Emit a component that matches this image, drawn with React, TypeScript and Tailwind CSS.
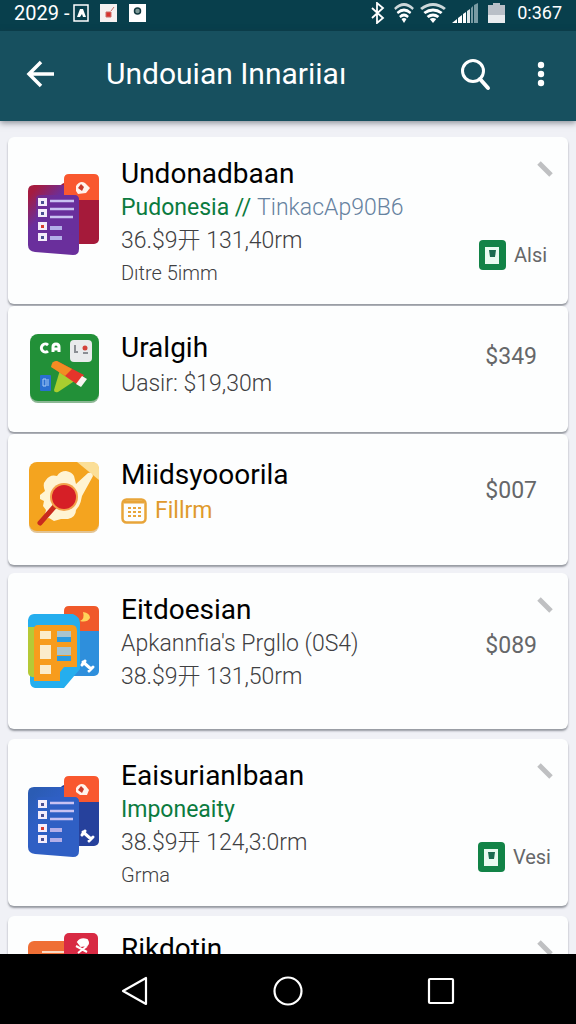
import { ReactNode } from "react";
import clsx from "clsx";

type Item = {
  title: string;
  icon: ReactNode;
  iconClass: string;
  cardClass: string;
  lines: ReactNode;
  editable?: boolean;
  price?: string;
  priceClass?: string;
  badge?: string;
};

type DocStackProps = { id: string; back: string; edge: string; front: string; glyph: string; tail?: boolean };

function DocStackIcon({ id, back, edge, front, glyph, tail }: DocStackProps) {
  return (
    <svg viewBox="0 0 72 84" className="w-[72px] h-[84px]" aria-hidden="true">
      <defs>
        <linearGradient id={id} x1="0" y1="0" x2="0.4" y2="0.5">
          <stop offset="0.2" stopColor={edge} />
          <stop offset="0.8" stopColor={front} />
        </linearGradient>
      </defs>
      <rect x="32" y="10" width="39" height="61" rx="5" fill={back} />
      <path d="M36 6q0-5 5-5h25q5 0 5 5v21H36z" fill="#f9582f" />
      <path d="M6 12h30v10h10q5 0 5 5v49q0 6-6 6L7 79q-7-1-7-7V18q0-6 6-6z" fill={`url(#${id})`} />
      <path d="M12 22h34q5 0 5 5v40q-20-20-43-10V26q0-4 4-4z" fill={front} opacity="0.7" />
      <path d={glyph} fill="#fff3ec" />
      <path d="m53 11 3 3-2 4-4-3z" fill="#c93a2a" />
      {tail && (
        <path d="M55 57l8 7M54 60l3-4M61 66l4-4" stroke="#fff" strokeWidth="3" strokeLinecap="round" />
      )}
      {[25, 36, 49, 60].map((y, i) => (
        <g key={y}>
          <rect x="10" y={y} width="9" height="8" fill="#f4ecfb" />
          <rect x="13" y={y + 3} width="3" height="3" fill={i === 2 ? "#d93a2e" : "#4a4f93"} />
        </g>
      ))}
      <path d="M22 28h24M22 36h24M22 44h23" stroke="#c9c2f2" strokeWidth="2.5" />
      <path d="M22 55h12M22 65h12" stroke="#b3aee8" strokeWidth="4" />
    </svg>
  );
}

function GreenAppIcon() {
  return (
    <svg viewBox="0 0 72 72" className="w-[72px] h-[72px]" aria-hidden="true">
      <rect x="2" y="3" width="69" height="66" rx="8" fill="#1c6f2a" opacity="0.5" />
      <rect x="2" y="0" width="69" height="67" rx="8" fill="#229038" />
      <path d="M20 11a4 4 0 1 0 0 6M25 18v-5q0-3 3-3t3 3v5M25 15h6" fill="none" stroke="#fff" strokeWidth="3" />
      <rect x="42" y="6" width="22" height="22" rx="4" fill="#e9ebec" />
      <path d="M47 11v7h3M55 19h5" stroke="#8b8f94" strokeWidth="2" fill="none" />
      <circle cx="57" cy="14" r="2.5" fill="#d3423a" />
      <path d="M32 36 26 56q0 3 4 2l18-12z" fill="#a9cd2f" />
      <path d="M29 27 24 33l26 18 6-10z" fill="#e5352b" />
      <path d="M29 27q-5-1-6 6l14 9 7-7z" fill="#f38b23" />
      <path d="m54 42 5 3-6 8-5-3z" fill="#f8f4f0" />
      <rect x="12" y="41" width="11" height="16" rx="1" fill="#2a6fd0" />
      <path d="M15 45h3v7h-3zM20 45v7" stroke="#a8ccf6" fill="none" />
    </svg>
  );
}

function OrangeAppIcon() {
  return (
    <svg viewBox="0 0 72 72" className="w-[72px] h-[72px]" aria-hidden="true">
      <rect x="1" y="3" width="70" height="68" rx="8" fill="#c98a2a" opacity="0.5" />
      <rect x="1" y="0" width="70" height="69" rx="8" fill="#f4a41f" />
      <path d="M49 0h15q7 0 7 7v11z" fill="#fbdf98" />
      <path d="M18 18q4-6 11-4 3-5 9-5 6 1 8 5l2 8 12-11q4-1 5 3L54 34q-1 6-3 10l-3 4q0 7-8 9l-7 0-7 2-5-3-5 1 2-9-3-4 1-5-4-2 0-4 5-4q-3-7 1-11z" fill="#fff4d3" />
      <path d="M27 44 12 61" stroke="#c92a1d" strokeWidth="5" strokeLinecap="round" />
      <circle cx="36" cy="35" r="14" fill="#f3a14b" />
      <circle cx="36" cy="35" r="12" fill="#d61f26" />
    </svg>
  );
}

function BlueCardIcon() {
  return (
    <svg viewBox="0 0 72 84" className="w-[72px] h-[84px]" aria-hidden="true">
      <rect x="36" y="10" width="35" height="61" rx="5" fill="#2e8fdc" />
      <path d="M36 6q0-5 5-5h25q5 0 5 5v20H36z" fill="#f0592a" />
      <path d="M55 7q7 1 7 6-3 5-10 3 5-2 3-9z" fill="#ffd35a" />
      <path d="M6 9h39q7 3 7 9v46L36 83H7q-5-1-5-7V22H0v-7q1-6 6-6z" fill="#25aeee" />
      <path d="M0 22h8v50H4q-4-1-4-5z" fill="#b5c936" />
      <path d="M10 20h34q5 0 5 6v36H36l-4 5v9H6V24q0-4 4-4z" fill="#f79c1d" />
      <path d="M12 26h11v8H12zM12 40h11v14H12zM12 60h11v9H12z" fill="#fbeccb" />
      <path d="M29 26h14v10H29zM29 42h14v8H29z" fill="#a9c5cf" />
      <path d="M29 32h14v5H29zM29 51h14v5H29z" fill="#2a9be0" />
      <path d="M55 57l8 7M54 60l3-4M61 66l4-4" stroke="#fff" strokeWidth="3" strokeLinecap="round" />
    </svg>
  );
}

function RedCardIcon() {
  return (
    <svg viewBox="0 0 72 84" className="w-[72px] h-[84px]" aria-hidden="true">
      <rect x="0" y="9" width="52" height="70" rx="6" fill="#ef6f35" />
      <path d="M14 20h22" stroke="#fbd9c2" strokeWidth="2" />
      <rect x="36" y="1" width="34" height="50" rx="5" fill="#d82a43" />
      <path d="M50 10q3-4 9-2 2 3 0 5l-6 1zM48 14l11 6M59 14l-9 7" stroke="#fff" strokeWidth="2" fill="#fff" />
    </svg>
  );
}

function CalendarIcon() {
  return (
    <svg viewBox="0 0 26 26" className="w-[26px] h-[26px]" fill="none" stroke="#e8a53a" aria-hidden="true">
      <rect x="1.5" y="1.5" width="23" height="23" rx="4" strokeWidth="2.5" />
      <path d="M3 4h20" strokeWidth="3" />
      <path d="M7 10h13M7 14h13M7 18h13" strokeWidth="2" strokeDasharray="3 2" />
    </svg>
  );
}

function WifiIcon({ className }: { className: string }) {
  return (
    <svg viewBox="0 0 24 20" preserveAspectRatio="none" className={className} fill="none" stroke="#fff" strokeWidth="2.8" aria-hidden="true">
      <path d="M1 6q11-9 22 0" opacity="0.8" />
      <path d="M4 10q8-6 16 0M7 14q5-4 10 0" />
      <path d="m9 16 3 4 3-4q-3-2-6 0z" fill="#fff" stroke="none" />
    </svg>
  );
}

const items: Item[] = [
  {
    title: "Undonadbaan",
    icon: <DocStackIcon id="doc-purple" back="#a51a3a" edge="#a51c40" front="#6a2f9c" glyph="M48 13q4-6 9-3l5 5-4 5-8 1-2-3z" />,
    iconClass: "mt-9",
    cardClass: "pt-5 pb-3.5",
    lines: (
      <>
        <p className="text-[#0b7b3f] font-normal">
          Pudonesia // <span className="text-[#6682a0] font-light">TinkacAp90B6</span>
        </p>
        <p>36.$9开 131,40rm</p>
        <p className="text-[20px]">Dıtre 5imm</p>
      </>
    ),
    editable: true,
    badge: "Alsi",
  },
  {
    title: "Uralgih",
    icon: <GreenAppIcon />,
    iconClass: "mt-7",
    cardClass: "pt-[25px] pb-8",
    lines: <p className="pt-0.5">Uasir: $19,30m</p>,
    price: "$349",
    priceClass: "mt-[34px]",
  },
  {
    title: "Miidsyooorila",
    icon: <OrangeAppIcon />,
    iconClass: "mt-7",
    cardClass: "pt-6 pb-[38px]",
    lines: (
      <p className="flex items-center gap-2 pt-0.5 text-[#e09a2c] font-normal">
        <CalendarIcon />
        Fillrm
      </p>
    ),
    price: "$007",
    priceClass: "mt-10",
  },
  {
    title: "Eitdoesian",
    icon: <BlueCardIcon />,
    iconClass: "mt-8",
    cardClass: "pt-5 pb-9",
    lines: (
      <>
        <p>Apkannfia's Prgllo (0S4)</p>
        <p>38.$9开 131,50rm</p>
      </>
    ),
    editable: true,
    price: "$089",
    priceClass: "mt-3",
  },
  {
    title: "Eaisurianlbaan",
    icon: <DocStackIcon id="doc-blue" back="#26419c" edge="#2b5cb4" front="#2f5fc4" glyph="M48 13q4-6 9-3l4 5-2 5-7 0-4-3z" tail />,
    iconClass: "mt-9",
    cardClass: "pt-5 pb-3.5",
    lines: (
      <>
        <p className="text-[#0b7b3f] font-normal">Imponeaity</p>
        <p>38.$9开 124,3:0rm</p>
        <p className="text-[20px]">Grma</p>
      </>
    ),
    editable: true,
    badge: "Vesi",
  },
  {
    title: "Rikdotin",
    icon: <RedCardIcon />,
    iconClass: "mt-4",
    cardClass: "pt-4 pb-9",
    lines: null,
    editable: true,
  },
];

function Card({ item }: { item: Item }) {
  return (
    <li className="flex bg-[#fdfefe] rounded-md pl-5 pr-[11px] shadow-[0_2px_2px_rgba(60,65,75,0.5)]">
      <div className={clsx("shrink-0", item.iconClass)}>{item.icon}</div>
      <div className={clsx("flex-1 min-w-0 pl-[21px] text-[23px] leading-[33px] font-light text-[#3f4042] whitespace-nowrap", item.cardClass)}>
        <h2 className="text-[28px] leading-[34px] font-normal text-black">{item.title}</h2>
        {item.lines}
      </div>
      <div className={clsx("flex flex-col items-end shrink-0", item.editable && "pt-5")}>
        {item.editable && (
          <button aria-label={`Edit ${item.title}`} className="size-6">
            <svg viewBox="0 0 24 24" className="size-6" aria-hidden="true">
              <path d="M6 6 18 18" stroke="#bfc0c2" strokeWidth="5" />
            </svg>
          </button>
        )}
        {item.price && (
          <span className={clsx("pr-5 text-[23px] leading-[34px] text-[#666769]", item.priceClass)}>{item.price}</span>
        )}
        {item.badge && (
          <div className="mt-auto mb-8 pr-1.5 flex items-center gap-2 text-[20px] leading-[34px] text-[#666769]">
            <svg viewBox="0 0 27 30" className="w-[27px] h-[30px]" aria-hidden="true">
              <rect width="27" height="30" rx="4" fill="#128347" />
              <rect x="6" y="7" width="14" height="17" fill="#e9fbf1" />
              <path d="M10 10h7l-1 7h-5z" fill="#1b6b50" />
            </svg>
            <span className="min-w-[37px]">{item.badge}</span>
          </div>
        )}
      </div>
    </li>
  );
}

export default function App() {
  return (
    <div className="h-screen flex flex-col overflow-hidden bg-[#f0f1f6] font-['Roboto','Noto_Sans_CJK_SC',sans-serif]">
      {/* Status bar */}
      <div className="h-[31px] shrink-0 bg-[#083f4c] text-white flex items-start justify-between px-3.5 text-[20px] leading-[26px]">
        <div className="flex items-center h-[25px]">
          <span className="w-[59px] whitespace-nowrap">2029 -</span>
          <svg viewBox="0 0 74 18" className="w-[74px] h-[18px]" aria-hidden="true">
            <rect x="1" y="1" width="14" height="16" fill="none" stroke="#fff" strokeWidth="1.5" />
            <path d="M4 13 7 5h3l3 8h-3l-1-3-2 3z" fill="#fff" />
            <rect x="27" width="17" height="18" fill="#f6f1f1" />
            <path d="M33 8h5v5h-5zM38 7l3-4" fill="#d8322e" stroke="#c9706c" />
            <rect x="56" width="17" height="18" fill="#fff" />
            <circle cx="64.5" cy="7" r="3" fill="#7d9896" stroke="#12383f" strokeWidth="1.5" />
          </svg>
        </div>
        <div className="flex items-center h-[25px]">
          <svg viewBox="0 0 16 22" className="w-4 h-[22px] mr-2" fill="none" stroke="#fff" strokeWidth="1.8" aria-hidden="true">
            <path d="m2 6 11 10-6 5V1l6 5L2 16" />
          </svg>
          <WifiIcon className="w-5 h-5 mr-1.5" />
          <WifiIcon className="w-[26px] h-5 mr-1.5" />
          <svg viewBox="0 0 26 20" className="w-[26px] h-5 mr-2.5" aria-hidden="true">
            <path d="M0 20 5 16v4zM6 15l4-3v8H6zM11 11l3-2v11h-3z" fill="#fff" />
            <path d="M15 8l3-2v14h-3z" fill="#dfe8ea" />
            <path d="M19 5l2-2v17h-2zM22 2l4-2v20h-4z" fill="#7a9ba3" />
          </svg>
          <svg viewBox="0 0 17 20" className="w-[17px] h-5 mr-3" aria-hidden="true">
            <path d="M0 2h5V0h7v2h5v18H0z" fill="#b9bfc7" />
            <path d="M0 12h17v8H0z" fill="#e8ebee" />
          </svg>
          <span className="text-[18px]">0:367</span>
        </div>
      </div>

      {/* App bar */}
      <header className="h-[90px] shrink-0 bg-[#17505f] text-white flex items-center pl-6 pr-5 pb-1 shadow-[0_2px_6px_rgba(40,45,60,0.5)]">
        <button aria-label="Back" className="w-[82px]">
          <svg viewBox="0 0 34 34" className="size-[34px]" fill="none" stroke="#fff" strokeWidth="3.5" aria-hidden="true">
            <path d="M30 17H6M17 5 5 17l12 12" />
          </svg>
        </button>
        <h1 className="flex-1 text-[30px] leading-9 whitespace-nowrap">Undouian Innariiaı</h1>
        <button aria-label="Search" className="mr-[34px]">
          <svg viewBox="0 0 34 34" className="size-[34px]" fill="none" stroke="#fff" strokeWidth="3" aria-hidden="true">
            <circle cx="15" cy="14" r="10.5" />
            <path d="m22 22 8 9" strokeWidth="4" strokeLinecap="round" />
          </svg>
        </button>
        <button aria-label="More options">
          <svg viewBox="0 0 30 30" className="size-[30px]" fill="#fff" aria-hidden="true">
            <circle cx="15" cy="6" r="3.2" />
            <circle cx="15" cy="15" r="3.2" />
            <circle cx="15" cy="24" r="3.2" />
          </svg>
        </button>
      </header>

      {/* List */}
      <main className="flex-1 min-h-0 overflow-hidden px-2 pt-4 flex flex-col gap-2">
        <ul className="flex flex-col gap-0.5">
          {items.slice(0, 3).map((item) => (
            <Card key={item.title} item={item} />
          ))}
        </ul>
        <ul className="flex flex-col gap-2.5">
          {items.slice(3).map((item) => (
            <Card key={item.title} item={item} />
          ))}
        </ul>
      </main>

      {/* Navigation bar */}
      <nav className="h-[70px] shrink-0 bg-black flex items-center justify-center gap-[121px] pt-1">
        <button aria-label="Back">
          <svg viewBox="0 0 32 32" className="size-8" fill="none" stroke="#fff" strokeWidth="2.2" strokeLinejoin="round" aria-hidden="true">
            <path d="M27 3v26L4 16z" />
          </svg>
        </button>
        <button aria-label="Home">
          <svg viewBox="0 0 32 32" className="size-8" fill="none" stroke="#fff" strokeWidth="2.2" aria-hidden="true">
            <circle cx="16" cy="16" r="13.5" />
          </svg>
        </button>
        <button aria-label="Recent apps">
          <svg viewBox="0 0 32 32" className="size-8" fill="none" stroke="#fff" strokeWidth="2.2" aria-hidden="true">
            <rect x="4" y="4" width="24" height="24" rx="1" />
          </svg>
        </button>
      </nav>
    </div>
  );
}
